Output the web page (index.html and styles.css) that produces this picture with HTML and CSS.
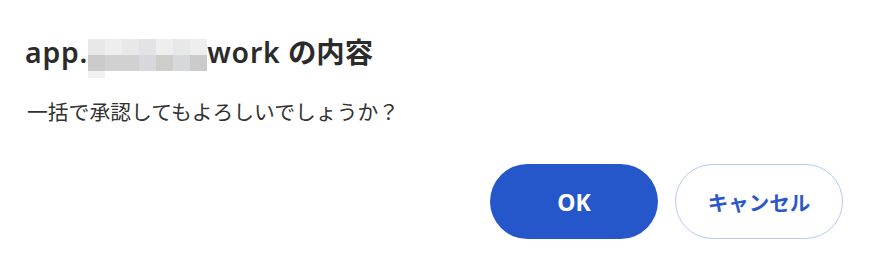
FILE: index.html
```html
<!DOCTYPE html>
<html lang="ja">
<head>
<meta charset="utf-8">
<link rel="stylesheet" href="styles.css">
</head>
<body>
<div class="dialog">
  <h1 class="title"><span class="latin">app.</span><span class="mosaic"><span class="mosaic-grid"><span class="cell c1"></span><span class="cell c2"></span><span class="cell c1"></span><span class="cell c3"></span><span class="cell c2"></span><span class="cell c1"></span><span class="cell c2"></span><span class="cell d1"></span><span class="cell d2"></span><span class="cell d2"></span><span class="cell d3"></span><span class="cell d4"></span><span class="cell d3"></span><span class="cell d1"></span><span class="cell e1"></span></span></span><span class="latin">work</span> の内容</h1>
  <p class="message">一括で承認してもよろしいでしょうか？</p>
  <div class="actions">
    <button class="btn btn-primary">OK</button>
    <button class="btn btn-secondary">キャンセル</button>
  </div>
</div>
</body>
</html>
```
FILE: styles.css
```css
html, body {
  margin: 0;
  padding: 0;
  background: #ffffff;
}
.dialog {
  width: 874px;
  height: 264px;
  box-sizing: border-box;
  padding: 35px 31px 0 25px;
  display: flex;
  flex-direction: column;
}
.title {
  margin: 0;
  height: 34px;
  font-family: "Noto Sans", "Noto Sans CJK JP", sans-serif;
  font-weight: 600;
  font-size: 28.4px;
  line-height: 34px;
  color: #2b2b2b;
  white-space: nowrap;
}
.latin {
  letter-spacing: 0.8px;
}
.mosaic {
  display: inline-block;
  overflow: hidden;
  width: 119px;
  height: 39px;
  margin: 0 0 -15px 0;
  vertical-align: baseline;
}
.mosaic-grid {
  display: grid;
  grid-template-columns: repeat(7, 17px);
  grid-template-rows: 16px 16px 7px;
}
.cell { display: block; }
.c1 { background: #e8e8e8; }
.c2 { background: #eeeeee; }
.c3 { background: #e3e3e5; }
.d1 { background: #cbcbcb; }
.d2 { background: #d1d1d1; }
.d3 { background: #d6d8dc; }
.d4 { background: #cfcdca; }
.e1 { background: #f2f2f2; }
.message {
  margin: 28px 0 0 2px;
  font-family: "Noto Sans CJK JP", sans-serif;
  font-size: 20.8px;
  line-height: 28px;
  color: #333333;
  white-space: nowrap;
}
.actions {
  margin-top: 39px;
  display: flex;
  justify-content: flex-end;
  gap: 17px;
}
.btn {
  width: 168px;
  height: 75px;
  border-radius: 38px;
  font-family: "Noto Sans", "Noto Sans CJK JP", sans-serif;
  font-weight: 700;
  font-size: 20.5px;
  display: flex;
  align-items: center;
  justify-content: center;
  padding: 0;
  box-sizing: border-box;
}
.btn-primary {
  background: #2557cb;
  color: #ffffff;
  border: none;
  font-size: 23px;
}
.btn-secondary {
  background: #ffffff;
  color: #2a58c8;
  border: 1.5px solid #b3cbf6;
}
```
